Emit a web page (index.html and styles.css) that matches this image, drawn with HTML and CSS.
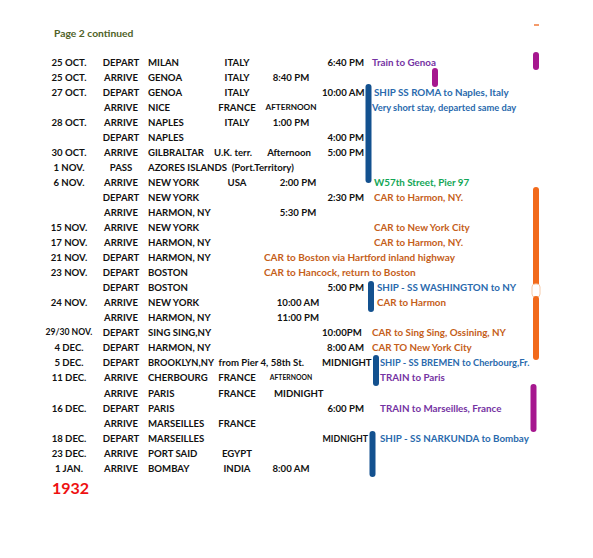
FILE: index.html
```html
<!DOCTYPE html>
<html>
<head>
<meta charset="UTF-8">
<title>Itinerary - Page 2 continued</title>
<link rel="stylesheet" href="styles.css">
</head>
<body>
<div class="page">
    <div class="heading">Page 2 continued</div>

    <div class="table">
        <div class="row"><span class="date">25 OCT.</span><span class="act">DEPART</span><span class="place">MILAN</span><span class="country">ITALY</span><span class="t1"></span><span class="t2">6:40 PM</span><span class="note purple n-l">Train to Genoa</span></div>
        <div class="row"><span class="date">25 OCT.</span><span class="act">ARRIVE</span><span class="place">GENOA</span><span class="country">ITALY</span><span class="t1">8:40 PM</span></div>
        <div class="row"><span class="date">27 OCT.</span><span class="act">DEPART</span><span class="place">GENOA</span><span class="country">ITALY</span><span class="t1"></span><span class="t2">10:00 AM</span><span class="note blue">SHIP SS ROMA to Naples, Italy</span></div>
        <div class="row"><span class="date"></span><span class="act">ARRIVE</span><span class="place">NICE</span><span class="country">FRANCE</span><span class="t1 small">AFTERNOON</span><span class="t2"></span><span class="note blue n-l smaller">Very short stay, departed same day</span></div>
        <div class="row"><span class="date">28 OCT.</span><span class="act">ARRIVE</span><span class="place">NAPLES</span><span class="country">ITALY</span><span class="t1">1:00 PM</span></div>
        <div class="row"><span class="date"></span><span class="act">DEPART</span><span class="place">NAPLES</span><span class="country"></span><span class="t1"></span><span class="t2">4:00 PM</span></div>
        <div class="row"><span class="date">30 OCT.</span><span class="act">ARRIVE</span><span class="place">GILBRALTAR</span><span class="country shift-l">U.K. terr.</span><span class="t1 pull-l">Afternoon</span><span class="t2">5:00 PM</span></div>
        <div class="row"><span class="date">1 NOV.</span><span class="act">PASS</span><span class="place wide">AZORES ISLANDS&nbsp; (Port.Territory)</span></div>
        <div class="row"><span class="date">6 NOV.</span><span class="act">ARRIVE</span><span class="place">NEW YORK</span><span class="country">USA</span><span class="t1 shift-r">2:00 PM</span><span class="t2"></span><span class="note green">W57th Street, Pier 97</span></div>
        <div class="row"><span class="date"></span><span class="act">DEPART</span><span class="place">NEW YORK</span><span class="country"></span><span class="t1"></span><span class="t2">2:30 PM</span><span class="note orange">CAR to Harmon, NY.</span></div>
        <div class="row"><span class="date"></span><span class="act">ARRIVE</span><span class="place">HARMON, NY</span><span class="country"></span><span class="t1 shift-r">5:30 PM</span></div>
        <div class="row"><span class="date">15 NOV.</span><span class="act">ARRIVE</span><span class="place">NEW YORK</span><span class="country"></span><span class="t1"></span><span class="t2"></span><span class="note orange">CAR to New York City</span></div>
        <div class="row"><span class="date">17 NOV.</span><span class="act">ARRIVE</span><span class="place">HARMON, NY</span><span class="country"></span><span class="t1"></span><span class="t2"></span><span class="note orange">CAR to Harmon, NY.</span></div>
        <div class="row"><span class="date">21 NOV.</span><span class="act">DEPART</span><span class="place">HARMON, NY</span><span class="country"></span><span class="long orange">CAR to Boston via Hartford inland highway</span></div>
        <div class="row"><span class="date">23 NOV.</span><span class="act">DEPART</span><span class="place">BOSTON</span><span class="country"></span><span class="long orange">CAR to Hancock, return to Boston</span></div>
        <div class="row"><span class="date"></span><span class="act">DEPART</span><span class="place">BOSTON</span><span class="country"></span><span class="t1"></span><span class="t2">5:00 PM</span><span class="note blue n-r">SHIP - SS WASHINGTON to NY</span></div>
        <div class="row"><span class="date">24 NOV.</span><span class="act">ARRIVE</span><span class="place">NEW YORK</span><span class="country"></span><span class="t1 shift-r">10:00 AM</span><span class="t2"></span><span class="note orange n-r">CAR to Harmon</span></div>
        <div class="row"><span class="date"></span><span class="act">ARRIVE</span><span class="place">HARMON, NY</span><span class="country"></span><span class="t1 shift-r">11:00 PM</span></div>
        <div class="row"><span class="date small-date">29/30 NOV.</span><span class="act">DEPART</span><span class="place">SING SING,NY</span><span class="country"></span><span class="t1"></span><span class="t2 pull">10:00PM</span><span class="note orange n-l">CAR to Sing Sing, Ossining, NY</span></div>
        <div class="row"><span class="date">4 DEC.</span><span class="act">DEPART</span><span class="place">HARMON, NY</span><span class="country"></span><span class="t1"></span><span class="t2">8:00 AM</span><span class="note orange n-l">CAR TO New York City</span></div>
        <div class="row"><span class="date">5 DEC.</span><span class="act">DEPART</span><span class="place wide"><span class="smaller">BROOKLYN,NY</span>&nbsp; from Pier 4, 58th St.</span><span class="t2 push">MIDNIGHT</span><span class="note blue smaller n-rr">SHIP - SS BREMEN to Cherbourg,Fr.</span></div>
        <div class="row"><span class="date">11 DEC.</span><span class="act">ARRIVE</span><span class="place">CHERBOURG</span><span class="country">FRANCE</span><span class="t1 tiny">AFTERNOON</span><span class="t2"></span><span class="note purple n-rr">TRAIN to Paris</span></div>
        <div class="row"><span class="date"></span><span class="act">ARRIVE</span><span class="place">PARIS</span><span class="country">FRANCE</span><span class="t1 shift-r">MIDNIGHT</span></div>
        <div class="row"><span class="date">16 DEC.</span><span class="act">DEPART</span><span class="place">PARIS</span><span class="country"></span><span class="t1"></span><span class="t2">6:00 PM</span><span class="note purple n-rr">TRAIN to Marseilles, France</span></div>
        <div class="row"><span class="date"></span><span class="act">ARRIVE</span><span class="place">MARSEILLES</span><span class="country">FRANCE</span></div>
        <div class="row"><span class="date">18 DEC.</span><span class="act">DEPART</span><span class="place">MARSEILLES</span><span class="country"></span><span class="t1"></span><span class="t2 smaller push">MIDNIGHT</span><span class="note blue n-rr">SHIP - SS NARKUNDA to Bombay</span></div>
        <div class="row"><span class="date">23 DEC.</span><span class="act">ARRIVE</span><span class="place">PORT SAID</span><span class="country">EGYPT</span></div>
        <div class="row"><span class="date">1 JAN.</span><span class="act">ARRIVE</span><span class="place">BOMBAY</span><span class="country">INDIA</span><span class="t1">8:00 AM</span></div>
    </div>

    <div class="year">1932</div>

    <svg class="marks" width="593" height="558" viewBox="0 0 593 558">
        <line class="dash" x1="534" y1="25" x2="539" y2="25"/>
        <line class="bar purple-bar" x1="536" y1="55" x2="536" y2="67"/>
        <line class="bar purple-bar" x1="435" y1="71" x2="435" y2="84"/>
        <line class="bar blue-bar" x1="368.5" y1="87" x2="368.5" y2="180"/>
        <line class="bar orange-bar" x1="536" y1="190" x2="536" y2="283"/>
        <rect class="gap" x="532" y="284" width="8" height="13" rx="3"/>
        <line class="bar orange-bar" x1="536" y1="299" x2="536" y2="357"/>
        <line class="bar blue-bar" x1="371" y1="284" x2="371" y2="309"/>
        <line class="bar blue-bar" x1="376" y1="358" x2="376" y2="383"/>
        <line class="bar purple-bar" x1="533.5" y1="387" x2="533.5" y2="429"/>
        <line class="bar blue-bar" x1="372.5" y1="434" x2="372.5" y2="474"/>
    </svg>
</div>
</body>
</html>
```

FILE: styles.css
```css
html, body {
    margin: 0;
    padding: 0;
    background: #fff;
}

.page {
    position: relative;
    width: 593px;
    height: 558px;
    font-family: Lato, "Liberation Sans", sans-serif;
    font-weight: 700;
    font-size: 9.6px;
    color: #111;
    overflow: hidden;
}

.heading {
    padding: 27px 0 0 54px;
    height: 12px;
    line-height: 12px;
    font-size: 10.3px;
    color: #4f6228;
}

.table {
    margin-top: 15.5px;
    padding-left: 40px;
}

.row {
    display: grid;
    grid-template-columns: 58px 46px 70px 46px 62px 42px 1fr;
    height: 15.05px;
    line-height: 15.05px;
    white-space: nowrap;
}

.date, .act, .country, .t1 {
    text-align: center;
}

.place {
    padding-left: 4px;
}

.wide {
    grid-column: 3 / 6;
}

.t2 {
    text-align: right;
}

.note {
    padding-left: 10px;
    grid-column: 7;
    font-size: 9.8px;
}

.n-l { padding-left: 8px; }
.n-r { padding-left: 13px; }
.n-rr { padding-left: 16px; }

.long {
    grid-column: 5 / 8;
    padding-left: 4px;
    font-size: 10px;
}

.shift-l { padding-right: 8px; }
.shift-r { padding-left: 14px; }
.pull-l { padding-right: 4px; }
.pull { padding-right: 3px; }
.push { margin-right: -4px; }

.small { font-size: 8.2px; }
.tiny { font-size: 6.8px; }
.smaller { font-size: 9.3px; }
.note.smaller { font-size: 9.3px; }
.t2.smaller { font-size: 8.8px; }
.small-date { font-size: 8.6px; }

.blue { color: #2a6aad; }
.orange { color: #c5601a; }
.purple { color: #7533a3; }
.green { color: #12a656; }

.year {
    padding: 2px 0 0 52px;
    font-size: 16px;
    line-height: 20px;
    color: #ee1111;
}

.marks {
    position: absolute;
    left: 0;
    top: 0;
    pointer-events: none;
}

.bar {
    stroke-linecap: round;
    stroke-width: 6;
}

.blue-bar { stroke: #13518f; }
.purple-bar { stroke: #a6178f; }
.orange-bar { stroke: #f26a1b; }

.dash {
    stroke: #f07a3a;
    stroke-width: 1.5;
}

.gap {
    fill: #fff;
    stroke: #f6c9a8;
    stroke-width: 1;
}
```
